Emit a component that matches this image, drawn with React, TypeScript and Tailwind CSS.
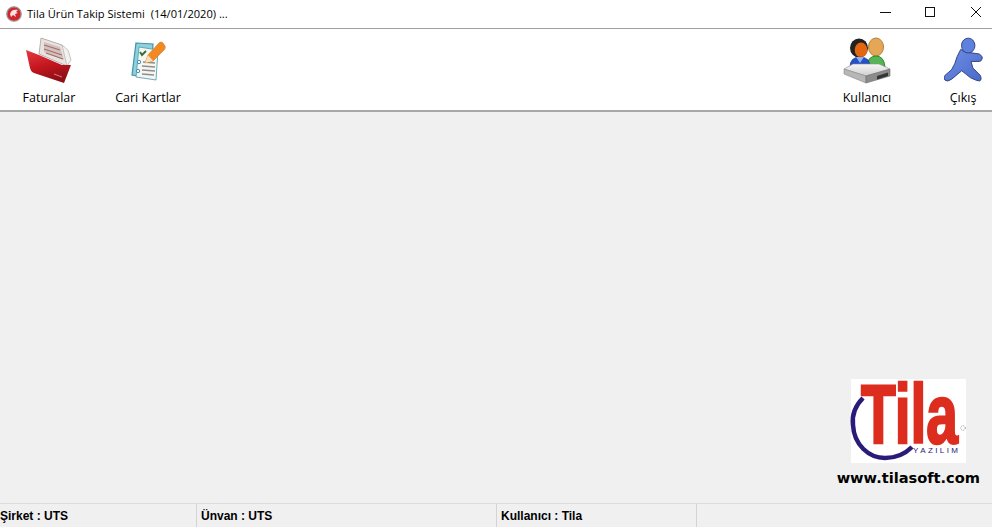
function AppIcon() {
  return (
    <svg width="16" height="16" viewBox="0 0 16 16">
      <circle cx="8" cy="8" r="7.2" fill="#d0252b" stroke="#9a9292" strokeWidth="1.3" />
      <path d="M4 8 C5 4 8 3 12 4 L10 6 L12 7 L9 8 L10 11 L7 9 L5 11 Z" fill="#f8e4e4" />
    </svg>
  );
}

function WindowButtons() {
  return (
    <svg width="112" height="28" viewBox="0 0 112 28" shapeRendering="crispEdges">
      <path d="M0 12.5 H11" stroke="#111" fill="none" />
      <rect x="45.5" y="7.5" width="9" height="9" fill="none" stroke="#111" />
      <path d="M91 7 L101 17 M101 7 L91 17" stroke="#111" fill="none" shapeRendering="auto" />
    </svg>
  );
}

function FolderIcon() {
  return (
    <svg width="50" height="48" viewBox="0 0 50 48" className="mt-[4px]">
      <defs>
        <linearGradient id="folderFront" x1="0" y1="0" x2="0.4" y2="1">
          <stop offset="0" stopColor="#e63a42" />
          <stop offset="0.55" stopColor="#c4161f" />
          <stop offset="1" stopColor="#8e0f17" />
        </linearGradient>
      </defs>
      <path d="M17 2 L38 9 L46 22 L43 30 L15 18 Z" fill="#e8e3e0" stroke="#a8a09c" strokeWidth="0.8" />
      <path d="M20 6 L36 11 L40 24 L20 16 Z" fill="#d2c2be" />
      <path d="M20 9 L36 14 M20 13 L38 19 M22 17 L39 23" stroke="#a56c6c" strokeWidth="1.3" />
      <path d="M38 9 L44 14 L47 24 L43 30 Z" fill="#f3f1ef" stroke="#b5b0ac" strokeWidth="0.7" />
      <path d="M2 14 L15 19 L38 29 L47 29 L40 47 L10 37 Q7 36 6 32 Z" fill="url(#folderFront)" />
      <path d="M30 38 L38 41" stroke="#e46a6f" strokeWidth="1.2" />
    </svg>
  );
}

function CardIcon() {
  return (
    <svg width="35" height="40" viewBox="0 0 35 40" className="mt-[9px]">
      <path d="M5 2 L22 3 L20 37 L1 34 Z" fill="#8fd0de" stroke="#3f93ab" strokeWidth="1.2" />
      <path d="M8 6 L27 9 L25 39 L5 36 Z" fill="#f5f5f2" stroke="#5aa2b6" strokeWidth="0.9" />
      <path d="M9 11 L11 14 L15 10" fill="none" stroke="#2f6d2a" strokeWidth="1.8" />
      <path d="M12 21 L24 22 M11 25 L24 26 M11 29 L24 30 M11 33 L23 34" stroke="#8e8e8e" strokeWidth="1.5" />
      <circle cx="8" cy="21" r="1.7" fill="#fff" stroke="#3f93ab" />
      <circle cx="7" cy="30" r="1.7" fill="#fff" stroke="#3f93ab" />
      <path d="M17 14 L28 2 Q30 0 32 2 L34 5 Q35 7 33 9 L22 20 L14 22 Z" fill="#f28a24" stroke="#d06f14" strokeWidth="0.6" />
      <path d="M14 22 L17 14 L22 20 Z" fill="#f7dfb8" />
    </svg>
  );
}

function UserIcon() {
  return (
    <svg width="48" height="48" viewBox="0 0 48 48" className="mt-[4px]">
      <defs>
        <linearGradient id="driveTop" x1="0" y1="0" x2="0" y2="1">
          <stop offset="0" stopColor="#f6f6f6" />
          <stop offset="1" stopColor="#cfcfcf" />
        </linearGradient>
      </defs>
      <ellipse cx="33" cy="11" rx="7.5" ry="9" fill="#e5a655" stroke="#ad8138" />
      <path d="M23 31 Q25 20 33 20 Q41 20 42 31 Z" fill="#55b552" stroke="#2a8536" />
      <ellipse cx="16" cy="12" rx="9" ry="9.5" fill="#222" />
      <ellipse cx="18" cy="14" rx="6.3" ry="7.6" fill="#e4670f" />
      <path d="M7 31 Q7 21 17 21 Q27 21 27 31 Z" fill="#2450c8" stroke="#1a388f" strokeWidth="0.7" />
      <path d="M13 21 L17 27 L21 21 Z" fill="#8fb1ee" />
      <path d="M1 33 L10 28 L36 28 L47 33 L23 40 Z" fill="url(#driveTop)" stroke="#8d8d8d" strokeWidth="0.6" />
      <path d="M1 33 L23 40 L23 47 L1 38 Z" fill="#b7b7b7" stroke="#868686" strokeWidth="0.6" />
      <path d="M23 40 L47 33 L47 40 L23 47 Z" fill="#8b8b8b" stroke="#6c6c6c" strokeWidth="0.6" />
      <path d="M34 40 L45 36.5 L45 40 L34 43.5 Z" fill="#353535" />
    </svg>
  );
}

function RunnerIcon() {
  return (
    <svg width="41" height="47" viewBox="0 0 44 50" className="mt-[5px] ml-[2px]">
      <defs>
        <linearGradient id="runnerBody" x1="0" y1="0" x2="1" y2="1">
          <stop offset="0" stopColor="#6f90e8" />
          <stop offset="1" stopColor="#4a69c8" />
        </linearGradient>
      </defs>
      <path
        d="M18 13 Q21 16 24 16 L38 18 Q42 21 41 23 Q40 26 38 26 L29 26 L31 33 L39 41 Q41 46 38 47 L34 46 Q28 44 24 40 L19 36 L13 41 Q8 46 4 47 Q0 47 0 43 L1 41 L8 35 Q12 29 14 21 Z"
        fill="url(#runnerBody)"
        stroke="#2f4076"
        strokeWidth="1"
      />
      <ellipse cx="26" cy="9" rx="7.2" ry="8" fill="#5e81df" stroke="#2f4076" strokeWidth="1" />
    </svg>
  );
}

function ToolButton({ label, icon, className }: { label: string; icon: React.ReactNode; className: string }) {
  return (
    <div className={`flex flex-col items-center ${className}`}>
      <div className="h-[55px] flex items-start justify-center">{icon}</div>
      <span className="mt-[3px] text-[12.5px] leading-[16px] text-black">{label}</span>
    </div>
  );
}

function TilaLogo() {
  return (
    <svg width="115" height="84" viewBox="0 0 115 84" className="bg-white overflow-visible">
      <path d="M12 19 C3 28 1 38 2 46 C3 66 18 79 34 79 C46 79 54 75 61 68" fill="none" stroke="#2a1a7a" strokeWidth="4.5" />
      <text
        x="10"
        y="64"
        fontFamily="Liberation Sans"
        fontWeight="700"
        fontSize="83"
        textLength="97"
        lengthAdjust="spacingAndGlyphs"
        fill="#dc2d1f"
        stroke="#dc2d1f"
        strokeWidth="2.5"
      >
        Tila
      </text>
      <text x="62" y="74" fontFamily="Liberation Sans" fontSize="8" textLength="45" fill="#2a1a7a">
        YAZILIM
      </text>
      <circle cx="112" cy="49" r="2.3" fill="none" stroke="#777" strokeWidth="0.8" strokeDasharray="1 1" />
    </svg>
  );
}

export default function App() {
  return (
    <div className="w-[992px] h-[527px] flex flex-col overflow-hidden bg-[#f0f0f0] font-['Open_Sans','Liberation_Sans',sans-serif] text-black">
      <div className="h-[29px] shrink-0 bg-white border-b border-[#a0a0a0] flex items-center pl-[6px]">
        <AppIcon />
        <span className="ml-[5px] text-[11.1px] whitespace-pre">Tila Ürün Takip Sistemi  (14/01/2020) ...</span>
        <div className="ml-auto">
          <WindowButtons />
        </div>
      </div>

      <div className="h-[83px] shrink-0 bg-white border-b-2 border-[#a8a8a8] flex pt-[3px]">
        <ToolButton label="Faturalar" icon={<FolderIcon />} className="w-[70px] ml-[14px]" />
        <ToolButton label="Cari Kartlar" icon={<CardIcon />} className="w-[80px] ml-[24px]" />
        <ToolButton label="Kullanıcı" icon={<UserIcon />} className="w-[70px] ml-auto" />
        <ToolButton label="Çıkış" icon={<RunnerIcon />} className="w-[50px] ml-[36px] mr-[4px]" />
      </div>

      <div className="flex-1 flex flex-col items-end justify-end pr-[12px] pb-[16px]">
        <div className="mr-[14px]">
          <TilaLogo />
        </div>
        <div className="mt-[6px] text-[14.6px] leading-[18px] font-bold font-['DejaVu_Sans',sans-serif]">www.tilasoft.com</div>
      </div>

      <div className="h-[24px] shrink-0 border-t border-[#dcdcdc] flex items-center text-[12px] font-bold font-['Liberation_Sans',sans-serif]">
        <div className="w-[197px] h-full flex items-center border-r border-[#d4d4d4]">Şirket : UTS</div>
        <div className="w-[300px] h-full flex items-center pl-[4px] border-r border-[#d4d4d4]">Ünvan : UTS</div>
        <div className="w-[200px] h-full flex items-center pl-[4px] border-r border-[#d4d4d4]">Kullanıcı : Tila</div>
      </div>
    </div>
  );
}
